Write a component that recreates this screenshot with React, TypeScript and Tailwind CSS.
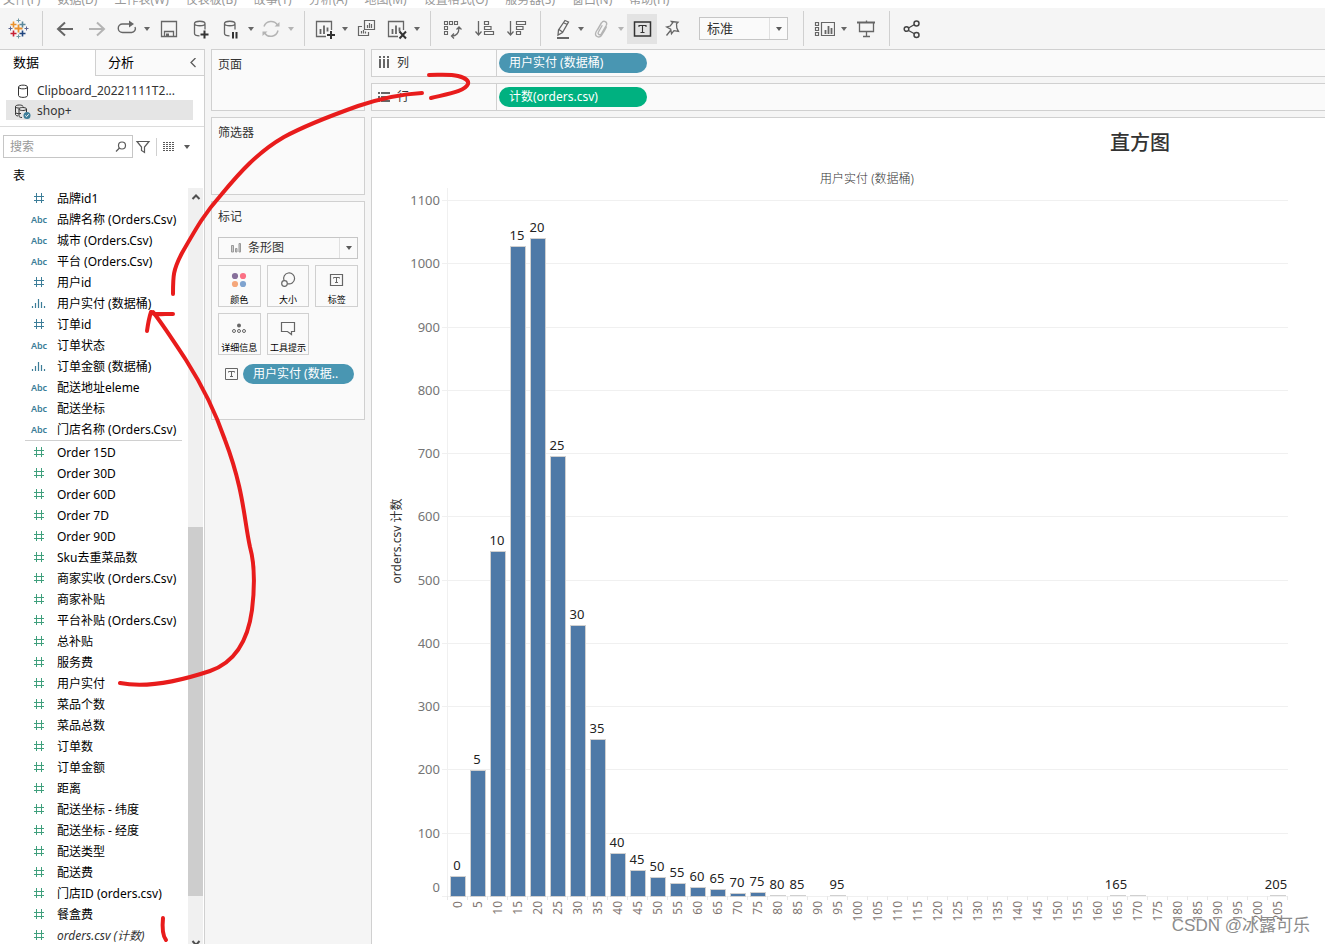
import React, { useState } from 'react';

const MENUS = ['文件(F)', '数据(D)', '工作表(W)', '仪表板(B)', '故事(T)', '分析(A)', '地图(M)', '设置格式(O)', '服务器(S)', '窗口(N)', '帮助(H)'];

type FieldType = 'number' | 'text' | 'bin';
type Field = { name: string; type: FieldType; italic?: boolean };

const DIMENSIONS: Field[] = [
    { name: '品牌id1', type: 'number' },
    { name: '品牌名称 (Orders.Csv)', type: 'text' },
    { name: '城市 (Orders.Csv)', type: 'text' },
    { name: '平台 (Orders.Csv)', type: 'text' },
    { name: '用户id', type: 'number' },
    { name: '用户实付 (数据桶)', type: 'bin' },
    { name: '订单id', type: 'number' },
    { name: '订单状态', type: 'text' },
    { name: '订单金额 (数据桶)', type: 'bin' },
    { name: '配送地址eleme', type: 'text' },
    { name: '配送坐标', type: 'text' },
    { name: '门店名称 (Orders.Csv)', type: 'text' },
];

const MEASURES: Field[] = [
    { name: 'Order 15D', type: 'number' },
    { name: 'Order 30D', type: 'number' },
    { name: 'Order 60D', type: 'number' },
    { name: 'Order 7D', type: 'number' },
    { name: 'Order 90D', type: 'number' },
    { name: 'Sku去重菜品数', type: 'number' },
    { name: '商家实收 (Orders.Csv)', type: 'number' },
    { name: '商家补贴', type: 'number' },
    { name: '平台补贴 (Orders.Csv)', type: 'number' },
    { name: '总补贴', type: 'number' },
    { name: '服务费', type: 'number' },
    { name: '用户实付', type: 'number' },
    { name: '菜品个数', type: 'number' },
    { name: '菜品总数', type: 'number' },
    { name: '订单数', type: 'number' },
    { name: '订单金额', type: 'number' },
    { name: '距离', type: 'number' },
    { name: '配送坐标 - 纬度', type: 'number' },
    { name: '配送坐标 - 经度', type: 'number' },
    { name: '配送类型', type: 'number' },
    { name: '配送费', type: 'number' },
    { name: '门店ID (orders.csv)', type: 'number' },
    { name: '餐盒费', type: 'number' },
    { name: 'orders.csv (计数)', type: 'number', italic: true },
];

// bin start -> number of orders
const BIN_COUNTS: Record<number, number> = {
    0: 31, 5: 199, 10: 545, 15: 1027, 20: 1040, 25: 695, 30: 428, 35: 248, 40: 68, 45: 41, 50: 30,
    55: 20, 60: 14, 65: 11, 70: 5, 75: 6, 80: 1, 85: 1, 95: 1, 165: 1, 170: 1, 205: 1,
};
const UNLABELLED = [170];
const BINS = Array.from({ length: 42 }, (_, i) => i * 5);
const Y_TICKS = Array.from({ length: 12 }, (_, i) => i * 100);

type IconProps = { children: React.ReactNode; size?: number };

function Icon({ children, size = 22 }: IconProps) {
    return (
        <svg width={size} height={size} viewBox={`0 0 ${size} ${size}`} fill="none" stroke="currentColor" className="shrink-0" aria-hidden="true">
            {children}
        </svg>
    );
}

function Caret() {
    return (
        <svg width="6" height="4" viewBox="0 0 6 4" className="shrink-0" aria-hidden="true">
            <path d="M0 0h6L3 4z" fill="currentColor" />
        </svg>
    );
}

function LogoIcon() {
    const crosses = [
        { x: 12, y: 11, r: 4, color: '#eb912b' },
        { x: 7, y: 7, r: 3, color: '#eb912b' },
        { x: 16, y: 7, r: 3, color: '#59879b' },
        { x: 7, y: 16, r: 3, color: '#c72035' },
        { x: 16, y: 16, r: 3, color: '#1f457e' },
        { x: 12, y: 3, r: 2, color: '#7099a6' },
        { x: 12, y: 19, r: 2, color: '#7099a6' },
        { x: 4, y: 11, r: 2, color: '#5b6591' },
        { x: 20, y: 11, r: 2, color: '#5b6591' },
    ];
    return (
        <Icon size={24}>
            {crosses.map((c) => (
                <path key={`${c.x}-${c.y}`} d={`M${c.x - c.r + 0.5} ${c.y + 0.5}h${c.r * 2}M${c.x + 0.5} ${c.y - c.r + 0.5}v${c.r * 2}`} stroke={c.color} strokeWidth={c.r > 3 ? 1.8 : c.r > 2 ? 1.6 : 1} />
            ))}
        </Icon>
    );
}

const BackIcon = () => <Icon><path d="M19 11H4M11 4.500L4 11l7 6.500" strokeWidth="2" /></Icon>;
const ForwardIcon = () => <Icon><path d="M3 11h15M11 4.500l7 6.500-7 6.500" strokeWidth="2" /></Icon>;
const RedoIcon = () => (
    <Icon>
        <path d="M13 6H6.500a4 4 0 0 0 0 8.500h9a3.800 3.800 0 0 0 3.500-5.500" strokeWidth="1.4" />
        <path d="M13 2.500v7l5-3.500z" fill="currentColor" stroke="none" />
    </Icon>
);
const SaveIcon = () => (
    <Icon>
        <path d="M3.500 3.500h15v15h-15zM6.500 18.500v-5h9v5" strokeWidth="1.3" />
        <path d="M8 15.500h3v3H8z" fill="currentColor" stroke="none" />
    </Icon>
);
const CYLINDER = 'M4.500 5.500c0-3 10.500-3 10.500 0s-10.500 3-10.500 0v10c0 1.500 2 2.300 5 2.300M15 5.500v6';
const AddSourceIcon = () => <Icon><path d={CYLINDER} strokeWidth="1.3" /><path d="M10.500 16.500h8M14.500 12.500v8" stroke="#333" strokeWidth="2" /></Icon>;
const PauseSourceIcon = () => <Icon><path d={CYLINDER} strokeWidth="1.3" /><path d="M13 14v6.500M16.500 14v6.500" stroke="#333" strokeWidth="2" /></Icon>;
const RefreshIcon = () => (
    <Icon>
        <path d="M4 8.500A7.500 7.500 0 0 1 17.500 7M18 12.500A7.500 7.500 0 0 1 4.500 15" strokeWidth="1.5" />
        <path d="M14.500 8.500h5V4zM7.500 13.500h-5V18z" fill="currentColor" stroke="none" />
    </Icon>
);
const SHEET = 'M17.500 12V3.500H2.500v15H12';
const SHEET_BARS = 'M6.500 11v5M10 7.500v8.500M13.500 9.500v4';
const NewSheetIcon = () => <Icon><path d={SHEET} strokeWidth="1.3" /><path d={SHEET_BARS} strokeWidth="1.8" /><path d="M13 17h8M17 13v8" stroke="#333" strokeWidth="2" /></Icon>;
const DuplicateIcon = () => (
    <Icon>
        <path d="M8.500 2.500h10v9h-10zM6 8.500H2.500v9h10V14" strokeWidth="1.2" />
        <path d="M11.500 7v3M13.500 5v5M15.500 6v4M5.500 13v2.500M7.500 12v3.500M9.500 13.500v2" strokeWidth="1.2" />
    </Icon>
);
const ClearIcon = () => <Icon><path d={SHEET} strokeWidth="1.3" /><path d={SHEET_BARS} strokeWidth="1.8" /><path d="M13.500 13.500l6.500 7M20 13.500l-6.500 7" stroke="#333" strokeWidth="2" /></Icon>;
const SwapIcon = () => (
    <Icon>
        <path d="M2.500 3.500h3v3h-3zM7.500 3.500h3v3h-3zM12.500 3.500h3v3h-3zM2.500 8.500h3v3h-3zM2.500 13.500h3v3h-3z" strokeWidth="1.1" />
        <path d="M17 9.500c0 6-3 8.500-7 8.500M14.500 11.500L17 9l2.500 2.500M12 15.500L9.500 18l2.500 2.500" strokeWidth="1.3" />
    </Icon>
);
const SortAscIcon = () => (
    <Icon>
        <path d="M4.500 3v13M1.500 13.500l3 3.500 3-3.500" strokeWidth="1.3" />
        <path d="M10.500 3.500h4v3h-4zM10.500 8.500h6.500v3h-6.500zM10.500 13.500h9v3h-9z" strokeWidth="1.2" />
    </Icon>
);
const SortDescIcon = () => (
    <Icon>
        <path d="M4.500 3v13M1.500 13.500l3 3.500 3-3.500" strokeWidth="1.3" />
        <path d="M10.500 3.500h9v3h-9zM10.500 8.500h6.500v3h-6.500zM10.500 13.500h4v3h-4z" strokeWidth="1.2" />
    </Icon>
);
const HighlightIcon = () => (
    <Icon>
        <path d="M15 2.500l3.500 1.500-6 10.500-4.500 2.500.5-5zM9 11.500l3.500 2.500M14 5l3.500 1.500" strokeWidth="1.3" />
        <path d="M7 20h12" strokeWidth="2" />
    </Icon>
);
const ClipIcon = () => (
    <Icon>
        <path d="M7.500 12l4-7c2-3.500 6.500-1 4.800 2.300l-5 8.500c-1.300 2-4 .5-3-1.500l4-7M16.500 8.500c0 1-.5 2-5 9-2.500 3-7.500.8-5.500-3.500l5.500-9.500" strokeWidth="1.3" />
    </Icon>
);
const LabelIcon = () => (
    <Icon>
        <path d="M3.500 4h16v14h-16z" strokeWidth="1.5" />
        <path d="M8 9V7.500h7V9M11.500 7.500v7M9.500 14.500h4" strokeWidth="1.1" />
    </Icon>
);
const PinIcon = () => (
    <Icon>
        <path d="M9.500 3.500l6.500.8-1.500 1.500.3 4.200 1.700 3.500-4.500-.8-2.500 3-.8-4.500-4-2.200 3.500-1 2.500-3.200zM8.500 12.500L4.500 17.500" strokeWidth="1.3" />
    </Icon>
);
const CardsIcon = () => (
    <Icon>
        <path d="M2.500 4.500h3v3h-3zM2.500 9.500h3v3h-3zM2.500 14.500h3v3h-3zM8.500 4.500h13v13h-13z" strokeWidth="1.2" />
        <path d="M12.500 12v4M15.500 8v8M18.500 10v6" strokeWidth="1.8" />
    </Icon>
);
const PresentIcon = () => (
    <Icon>
        <path d="M2 4.500h18" strokeWidth="2" />
        <path d="M4.500 5v8.500h14V5M11.500 2.500v2M11.500 13.500v4.500M8 18.500h7" strokeWidth="1.3" />
    </Icon>
);
const ShareIcon = () => (
    <Icon>
        <path d="M7.500 10l6-3.500M7.500 12.500l6 3.300" strokeWidth="1.3" />
        <circle cx="5.500" cy="11" r="2.300" strokeWidth="1.5" />
        <circle cx="15.500" cy="5.500" r="2.500" strokeWidth="1.5" />
        <circle cx="15.500" cy="17" r="2.500" strokeWidth="1.5" />
    </Icon>
);

function SmallLabelIcon() {
    return (
        <Icon size={14}>
            <path d="M1.500 1.500h12v11h-12z" />
            <path d="M4.500 5.500v-1h6v1M7.500 4.500v5M6 9.500h3" />
        </Icon>
    );
}

function ToolButton({ label, className = 'w-8', children }: { label: string; className?: string; children: React.ReactNode }) {
    return (
        <button type="button" aria-label={label} className={`flex h-[30px] shrink-0 items-center justify-center ${className}`}>
            {children}
        </button>
    );
}

const Separator = () => <div className="ml-[7px] mr-1.5 h-[35px] w-px shrink-0 bg-[#d0d0d0]" />;

function Toolbar() {
    return (
        <div className="flex h-[41px] shrink-0 items-center bg-[#f5f5f5] text-[#666]">
            <ToolButton label="Tableau" className="w-[35px]"><LogoIcon /></ToolButton>
            <Separator />
            <ToolButton label="撤消"><BackIcon /></ToolButton>
            <ToolButton label="重做" className="w-8 text-[#b4b4b4]"><ForwardIcon /></ToolButton>
            <ToolButton label="重播" className="w-7"><RedoIcon /></ToolButton>
            <ToolButton label="重播选项" className="w-3"><Caret /></ToolButton>
            <ToolButton label="保存"><SaveIcon /></ToolButton>
            <ToolButton label="新建数据源"><AddSourceIcon /></ToolButton>
            <ToolButton label="暂停更新" className="w-7"><PauseSourceIcon /></ToolButton>
            <ToolButton label="暂停选项" className="w-3"><Caret /></ToolButton>
            <ToolButton label="刷新" className="w-7 text-[#b4b4b4]"><RefreshIcon /></ToolButton>
            <ToolButton label="刷新选项" className="w-3 text-[#b4b4b4]"><Caret /></ToolButton>
            <Separator />
            <ToolButton label="新建工作表" className="w-7"><NewSheetIcon /></ToolButton>
            <ToolButton label="新建选项" className="w-3"><Caret /></ToolButton>
            <ToolButton label="复制"><DuplicateIcon /></ToolButton>
            <ToolButton label="清除" className="w-7"><ClearIcon /></ToolButton>
            <ToolButton label="清除选项" className="w-3"><Caret /></ToolButton>
            <Separator />
            <ToolButton label="交换行和列"><SwapIcon /></ToolButton>
            <ToolButton label="升序排序"><SortAscIcon /></ToolButton>
            <ToolButton label="降序排序"><SortDescIcon /></ToolButton>
            <Separator />
            <ToolButton label="突出显示" className="w-7"><HighlightIcon /></ToolButton>
            <ToolButton label="突出显示选项" className="w-3"><Caret /></ToolButton>
            <ToolButton label="组成员" className="w-7 text-[#b4b4b4]"><ClipIcon /></ToolButton>
            <ToolButton label="组选项" className="w-3 text-[#b4b4b4]"><Caret /></ToolButton>
            <ToolButton label="显示标记标签" className="w-[30px] bg-[#e3e3e3] text-[#333]"><LabelIcon /></ToolButton>
            <ToolButton label="固定轴"><PinIcon /></ToolButton>
            <DropDown label="适合" value="标准" className="ml-2.5 mr-2 h-[23px] w-[89px]" selectClass="pl-[7px] text-[13px]" />
            <Separator />
            <ToolButton label="显示/隐藏卡" className="w-7"><CardsIcon /></ToolButton>
            <ToolButton label="卡选项" className="w-3"><Caret /></ToolButton>
            <ToolButton label="演示模式"><PresentIcon /></ToolButton>
            <Separator />
            <ToolButton label="共享" className="w-8 text-[#444]"><ShareIcon /></ToolButton>
        </div>
    );
}

function DropDown({ label, value, className, selectClass, icon }: { label: string; value: string; className: string; selectClass: string; icon?: React.ReactNode }) {
    return (
        <div className={`relative shrink-0 border border-[#c6c6c6] bg-[#fafafa] text-[#333] ${className}`}>
            <select aria-label={label} defaultValue={value} className={`block h-full w-full appearance-none bg-transparent outline-none ${selectClass}`}>
                <option>{value}</option>
            </select>
            {icon}
            <span className="pointer-events-none absolute inset-y-0 right-0 flex w-[18px] items-center justify-center border-l border-[#e0e0e0] text-[#5a5a5a]">
                <Caret />
            </span>
        </div>
    );
}

function FieldIcon({ type, measure }: { type: FieldType; measure?: boolean }) {
    if (type === 'text') return <span className="text-[9px] font-semibold text-[#3c7d98]">Abc</span>;
    if (type === 'bin') {
        return (
            <svg width="16" height="12" viewBox="0 0 16 12" stroke="#3c7d98" aria-hidden="true">
                <path d="M1.500 8v2M4.500 5v5M7.500 1v9M10.500 4v6M13.500 8v2" strokeWidth="1.200" />
            </svg>
        );
    }
    return (
        <svg width="12" height="12" viewBox="0 0 12 12" stroke={measure ? '#3f9f7c' : '#3c7d98'} aria-hidden="true">
            <path d="M1 3.500h10M1 7.500h10M3.500 0v10M8.500 0v10" />
        </svg>
    );
}

function FieldRow({ field, measure }: { field: Field; measure?: boolean }) {
    return (
        <li className="flex h-[21px] items-center whitespace-nowrap text-[12px]">
            <span className="ml-[27px] mr-1.5 flex w-6 shrink-0 items-center justify-center">
                <FieldIcon type={field.type} measure={measure} />
            </span>
            <span className={field.italic ? 'italic text-[#333]' : 'text-black'}>{field.name}</span>
        </li>
    );
}

function DataPane() {
    const [query, setQuery] = useState('');

    return (
        <aside className="flex w-[205px] shrink-0 flex-col border-r border-t border-[#d0d0d0] bg-white">
            <div className="flex h-[26px] shrink-0 text-[13px] text-black">
                <button type="button" className="w-[95px] pl-[13px] text-left">数据</button>
                <div className="flex flex-1 items-center justify-between border-b border-l border-[#d0d0d0] bg-[#fafafa] pl-3 pr-1.5">
                    <button type="button">分析</button>
                    <button type="button" aria-label="折叠" className="text-[#5a5a5a]">
                        <Icon size={10}><path d="M7.500 0L3 4.500 7.500 9" strokeWidth="1.300" /></Icon>
                    </button>
                </div>
            </div>
            <ul className="shrink-0 border-b border-[#dcdcdc] pb-1.5 pl-1.5 pr-[11px] pt-1 text-[12px] text-[#333]">
                <li className="flex h-5 items-center gap-1.5 pl-2 pt-0.5">
                    <Icon size={17}><path d="M4.500 4c0-2.500 9-2.500 9 0s-9 2.500-9 0v8.500c0 2.500 9 2.500 9 0V4" /></Icon>
                    <span>Clipboard_20221111T2...</span>
                </li>
                <li className="flex h-5 items-center gap-1.5 bg-[#e5e5e5] pl-2 pt-0.5">
                    <Icon size={17}>
                        <path d="M7 10.500c-3.500.5-5.500-.2-5.500-1.200V3.500c0-2 7.500-2 7.500 0M1.500 3.500c0 1.200 2 1.700 4 1.500M4 13c-1.500-.2-2.500-.8-2.500-1.500V9.500" />
                        <path d="M5 6c0-2 7.500-2 7.500 0s-7.500 2-7.500 0v7c0 .8 1 1.500 3 1.500M12.500 6v3" />
                        <circle cx="13" cy="12.500" r="3.500" fill="#3c7d98" stroke="none" />
                        <path d="M11.300 12.500l1.200 1.200 2.200-2.400" stroke="#fff" />
                    </Icon>
                    <span>shop+</span>
                </li>
            </ul>
            <div className="flex shrink-0 items-center pl-[3px] pt-2 text-[#5a5a5a]">
                <div className="flex h-[23px] w-[130px] items-center border border-[#c6c6c6] pl-1.5 pr-1">
                    <input aria-label="搜索" placeholder="搜索" value={query} onChange={(e) => setQuery(e.target.value)} className="w-0 flex-1 text-[12px] text-[#333] outline-none placeholder:text-[#999]" />
                    <Icon size={14}><circle cx="8" cy="5.500" r="3.500" strokeWidth="1.200" /><path d="M5.500 8L2 11.500" strokeWidth="1.200" /></Icon>
                </div>
                <button type="button" aria-label="筛选" className="ml-0.5">
                    <Icon size={16}><path d="M2 2.500h12L9.500 8v5.500l-3-2V8z" strokeWidth="1.200" /></Icon>
                </button>
                <div className="ml-[5px] h-[18px] w-px bg-[#d0d0d0]" />
                <button type="button" aria-label="查看方式" className="ml-1.5 flex items-center gap-[7px]">
                    <Icon size={14}><path d="M0 2.500h12M0 4.500h12M0 6.500h12M0 8.500h12M0 10.500h12" strokeDasharray="2 1" /></Icon>
                    <Caret />
                </button>
            </div>
            <h2 className="flex h-[30px] shrink-0 items-center pl-[13px] pt-1.5 text-[12px] text-black">表</h2>
            <div className="flex min-h-0 flex-1 overflow-hidden">
                <div className="min-w-0 flex-1">
                    <ul>
                        {DIMENSIONS.map((f) => <FieldRow key={f.name} field={f} />)}
                    </ul>
                    <div className="mb-px ml-[25px] mr-1.5 h-px bg-[#d0d0d0]" />
                    <ul>
                        {MEASURES.map((f) => <FieldRow key={f.name} field={f} measure />)}
                    </ul>
                </div>
                <div className="mr-px flex w-[15px] shrink-0 flex-col items-center bg-[#f0f0f0] text-[#505050]">
                    <div className="flex h-[18px] items-center"><Icon size={10}><path d="M1.500 7L5 3.500 8.500 7" strokeWidth="2" /></Icon></div>
                    <div className="min-h-0 flex-1" />
                    <div className="h-[369px] w-full shrink-0 bg-[#cdcdcd]" />
                    <div className="flex h-12 shrink-0 items-end">
                        <svg width="10" height="4" viewBox="0 0 10 4" fill="none" stroke="currentColor"><path d="M1.500 1L5 5l3.500-4" strokeWidth="2" /></svg>
                    </div>
                </div>
            </div>
        </aside>
    );
}

function MarkButton({ label, children }: { label: string; children: React.ReactNode }) {
    return (
        <button type="button" className="flex h-[42px] flex-col items-center border border-[#d0d0d0] bg-[#fafafa] pt-[3px] text-[#666]">
            {children}
            <span className="whitespace-nowrap text-[9px] leading-[18px] text-black">{label}</span>
        </button>
    );
}

const CARD = 'shrink-0 border border-[#d0d0d0] bg-[#fafafa] px-1.5 pt-1.5 text-[12px] text-[#333]';

function CardsColumn() {
    return (
        <div className="flex w-[166px] shrink-0 flex-col gap-1.5 px-1.5">
            <section className={`h-[62px] ${CARD}`}>页面</section>
            <section className={`h-[78px] ${CARD}`}>筛选器</section>
            <section className={`h-[219px] ${CARD}`}>
                <h2>标记</h2>
                <DropDown
                    label="标记类型"
                    value="条形图"
                    className="mt-[11px] h-[22px] w-full"
                    selectClass="pl-[29px] text-[12px]"
                    icon={
                        <svg width="12" height="12" viewBox="0 0 12 12" fill="#ccc" stroke="#999" className="pointer-events-none absolute left-3 top-1" aria-hidden="true">
                            <path d="M.5 3.500h2v6.500h-2zM4.500 6.500h1.500v3.500h-1.500zM8 1.500h1.500v8.500h-1.500z" />
                        </svg>
                    }
                />
                <div className="mt-1.5 grid grid-cols-3 gap-1.5">
                    <MarkButton label="颜色">
                        <Icon size={22}>
                            <g stroke="none">
                                <circle cx="7" cy="7" r="3.100" fill="#87709b" />
                                <circle cx="15" cy="7" r="3.100" fill="#fb7185" />
                                <circle cx="7" cy="15" r="3.100" fill="#f5a77b" />
                                <circle cx="15" cy="15" r="3.100" fill="#7fa3cf" />
                            </g>
                        </Icon>
                    </MarkButton>
                    <MarkButton label="大小">
                        <Icon size={22}>
                            <path d="M7 11.500A5.500 5.500 0 1 1 10.500 14.700" strokeWidth="1.200" />
                            <circle cx="7.500" cy="14.500" r="2.800" strokeWidth="1.200" />
                        </Icon>
                    </MarkButton>
                    <MarkButton label="标签">
                        <Icon size={22}>
                            <path d="M4.500 5.500h12v11h-12z" strokeWidth="1.200" />
                            <path d="M7.500 9.500v-1h6v1M10.500 8.500v5M9 13.500h3" />
                        </Icon>
                    </MarkButton>
                    <MarkButton label="详细信息">
                        <Icon size={22}>
                            <circle cx="11" cy="8.500" r="2" fill="currentColor" stroke="none" />
                            <circle cx="6" cy="14" r="1.500" />
                            <circle cx="11" cy="14" r="1.500" />
                            <circle cx="16" cy="14" r="1.500" />
                        </Icon>
                    </MarkButton>
                    <MarkButton label="工具提示">
                        <Icon size={22}>
                            <path d="M4.500 5.500h13v9h-3v3l-4-3h-6z" strokeWidth="1.200" />
                        </Icon>
                    </MarkButton>
                </div>
                <div className="mt-[9px] flex items-center gap-[5px] pl-1.5 text-[#666]">
                    <SmallLabelIcon />
                    <button type="button" className="h-5 w-[111px] rounded-full bg-[#4996b2] pl-2.5 text-left leading-5 text-white">用户实付 (数据..</button>
                </div>
            </section>
        </div>
    );
}

function Shelf({ label, icon, pill, pillClass }: { label: string; icon: React.ReactNode; pill: string; pillClass: string }) {
    return (
        <div className="flex h-7 shrink-0 border-y border-l border-[#d0d0d0] bg-[#fafafa] text-[12px]">
            <div className="flex w-[125px] items-center gap-1.5 border-r border-[#d0d0d0] pl-[5px] text-[#333]">
                {icon}
                {label}
            </div>
            <div className="flex flex-1 items-center pl-0.5">
                <button type="button" className={`h-5 w-[148px] rounded-full pl-2.5 text-left leading-5 text-white ${pillClass}`}>{pill}</button>
            </div>
        </div>
    );
}

const BASE_Y = 728;
const AXIS_X = 75;
const STEP = 20;
const yOf = (count: number) => Math.round(BASE_Y - count * 0.6327);

function Histogram() {
    const right = AXIS_X + STEP * BINS.length;
    return (
        <svg width="953" height="776" viewBox="0 0 953 776" role="img" aria-label="直方图" className="block shrink-0 text-[13px]">
            <text x={(AXIS_X + right) / 2} y="15" textAnchor="middle" fontSize="12" fontWeight="300" fill="#333">用户实付 (数据桶)</text>
            {Y_TICKS.map((t) => (
                <g key={t}>
                    <path d={`M${AXIS_X - 5} ${yOf(t) + 0.5}H${right + 1}`} stroke="#f0f0f0" />
                    <text x="68" y={t === 0 ? BASE_Y - 4 : yOf(t) + 5} textAnchor="end" fill="#757575">{t}</text>
                </g>
            ))}
            <path d={`M${AXIS_X + 0.5} 20V${BASE_Y}`} stroke="#f0f0f0" />
            <text transform="translate(29 373) rotate(-90)" textAnchor="middle" fontSize="12" fill="#333">orders.csv 计数</text>
            {BINS.map((bin, i) => {
                const x = AXIS_X + i * STEP;
                const count = BIN_COUNTS[bin];
                const top = count ? yOf(count) : BASE_Y;
                return (
                    <g key={bin}>
                        <path d={`M${x + 0.5} ${BASE_Y}v4`} stroke="#e8e8e8" />
                        {count > 1 && <rect x={x + 3.5} y={top + 0.5} width="15" height={BASE_Y - top} fill="#4e79a7" stroke="#d0d0d0" />}
                        {count === 1 && <path d={`M${x + 3} ${BASE_Y - 0.5}h16`} stroke="#d0d0d0" />}
                        {count && !UNLABELLED.includes(bin) ? (
                            <text x={bin > 100 ? x + 9 : x + 10} y={top - 6} textAnchor="middle" fill="#222">{bin}</text>
                        ) : null}
                        <text transform={`translate(${x + 15} 733) rotate(-90)`} textAnchor="end" fontSize="12" fill="#7f7672">{bin}</text>
                    </g>
                );
            })}
            <path d={`M${right + 0.5} ${BASE_Y}v4`} stroke="#e8e8e8" />
        </svg>
    );
}

function Worksheet() {
    return (
        <main className="flex min-w-0 flex-1 flex-col gap-1.5">
            <Shelf
                label="列"
                pill="用户实付 (数据桶)"
                pillClass="bg-[#4996b2]"
                icon={<Icon size={14}><path d="M3 0v2M7 0v2M11 0v2M3 3v9M7 3v9M11 3v9" stroke="#666" strokeWidth="2" /></Icon>}
            />
            <Shelf
                label="行"
                pill="计数(orders.csv)"
                pillClass="bg-[#00b180]"
                icon={<Icon size={14}><path d="M1 3h2M1 7h2M1 11h2M4 3h9M4 7h9M4 11h9" stroke="#666" strokeWidth="2" /></Icon>}
            />
            <section className="flex min-h-0 flex-1 flex-col overflow-hidden border-l border-t border-[#d0d0d0] bg-white">
                <h1 className="h-[50px] w-[1536px] shrink-0 text-center text-[20px] font-medium leading-[50px] text-[#333]">直方图</h1>
                <Histogram />
            </section>
        </main>
    );
}

// freehand marker strokes drawn over the workspace
function Annotations() {
    return (
        <svg width="480" height="944" viewBox="0 0 480 944" className="pointer-events-none absolute left-0 top-0" fill="none" stroke="#e81c1c" strokeWidth="4" strokeLinecap="round" strokeLinejoin="round" aria-hidden="true">
            <path d="M173 294C173 276 173 270 182 253C198 225 205 213 221 195C240 172 258 152 284 137C306 125 330 116 358 106C382 98 402 94 422 93" />
            <path d="M429 75C440 75 450 74 458 76C466 78 469 81 468 84C465 91 452 93 431 98" />
            <path d="M120 683C140 687 168 685 210 671C236 662 248 640 252 610C255 585 255 565 250 547C244 520 244 490 225 440C213 405 200 382 186 360C172 339 164 326 153 312" />
            <path d="M147 331C148 324 149 318 151 312C153 315 160 314 173 314" />
            <path d="M163 918C162 928 163 936 166 940" />
        </svg>
    );
}

export default function App() {
    return (
        <div className="relative flex h-screen flex-col overflow-hidden bg-[#f5f5f5] font-['Noto_Sans','Noto_Sans_CJK_SC',sans-serif]">
            <nav className="flex h-2 shrink-0 items-end gap-[17px] overflow-hidden bg-white pl-[3px] text-[12px] leading-4 text-[#999]">
                {MENUS.map((m) => (
                    <button key={m} type="button" className="shrink-0 whitespace-nowrap">{m}</button>
                ))}
            </nav>
            <Toolbar />
            <div className="flex min-h-0 flex-1">
                <DataPane />
                <CardsColumn />
                <Worksheet />
            </div>
            <Annotations />
            <div className="pointer-events-none absolute bottom-1.5 right-[15px] font-['Liberation_Sans','Noto_Sans_CJK_SC',sans-serif] text-[17px] leading-6 text-[#8c8c8c]">CSDN @冰露可乐</div>
        </div>
    );
}
